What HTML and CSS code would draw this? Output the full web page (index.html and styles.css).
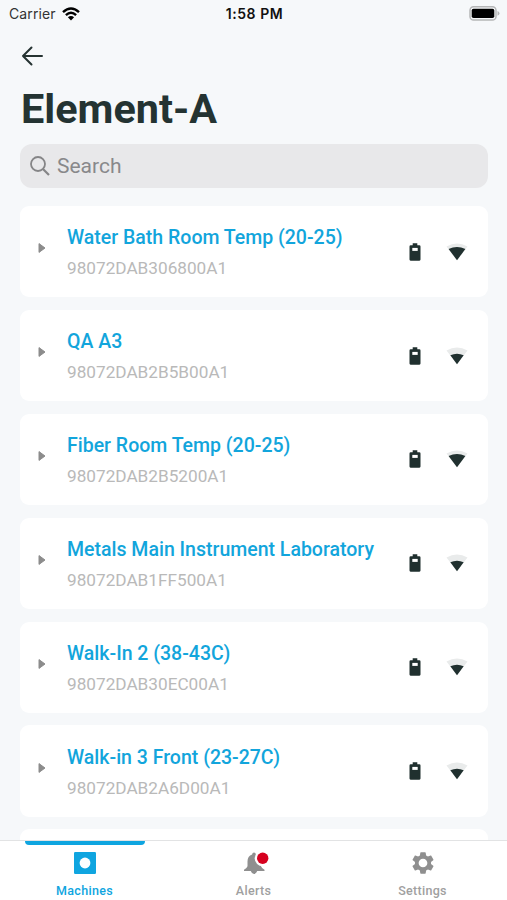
FILE: index.html
```
<!DOCTYPE html>
<html lang="en">
<head>
    <meta charset="UTF-8">
    <meta name="viewport" content="width=device-width, initial-scale=1.0">
    <title>Element-A</title>
    <link rel="stylesheet" href="styles.css">
</head>
<body>

    <!-- Shared icons -->
    <svg class="sprite" aria-hidden="true">
        <symbol id="arrow" viewBox="0 0 8 10">
            <path d="M1 .6 7 5 1 9.4z" fill="#8c8c8c" stroke="#8c8c8c" stroke-width="1" stroke-linejoin="round"/>
        </symbol>
        <symbol id="battery" viewBox="0 0 12 18">
            <path d="M3.700.3h4.600v1.900h2A1.200 1.200 0 0 1 11.500 3.400v13.200a1.100 1.100 0 0 1-1.100 1.100H1.600A1.100 1.100 0 0 1 .5 16.600V3.400a1.200 1.200 0 0 1 1.200-1.200h2z" fill="#20302f"/>
            <path d="M3.300 4.900h5.400v3H3.300z" fill="#fff"/>
        </symbol>
        <symbol id="signal-3" viewBox="0 0 22 18">
            <path d="M.5 3.600Q11-2.800 21.500 3.600L11 17.300z" fill="#e9ebeb"/>
            <path d="M2.600 5.900Q11 2.300 19.400 5.900L11 17.300z" fill="#20302f"/>
        </symbol>
        <symbol id="signal-2" viewBox="0 0 22 18">
            <path d="M.5 3.600Q11-2.800 21.500 3.600L11 17.300z" fill="#e9ebeb"/>
            <path d="M4.300 8.300Q11 5 17.700 8.300L11 17.300z" fill="#20302f"/>
        </symbol>
    </svg>

    <div class="screen">

        <!-- Status Bar -->
        <div class="status-bar">
            <div class="carrier">
                <span>Carrier</span>
                <svg width="18" height="14" viewBox="0 0 18 14" fill="none" stroke="#000" stroke-width="2.400">
                    <path d="M1 5.100Q9-2.300 17 5.100M3.900 8.100Q9 3.300 14.100 8.100"/>
                    <path d="M5.900 10.300Q9 7.600 12.100 10.300L9 13.500z" fill="#000" stroke="none"/>
                </svg>
            </div>
            <div class="time">1:58 PM</div>
            <svg class="phone-battery" width="31" height="15" viewBox="0 0 31 15">
                <rect x="1" y=".8" width="26" height="13.200" rx="3.600" fill="#f7f8fa" stroke="#b5b6b7" stroke-width="1.500"/>
                <rect x="2.700" y="2.700" width="22.600" height="9.400" rx="1.800" fill="#000"/>
                <path d="M28.500 5v4.800q2-1 2-2.400t-2-2.400z" fill="#b5b6b7"/>
            </svg>
        </div>

        <!-- Header -->
        <div class="header">
            <svg class="back" width="22" height="20" viewBox="0 0 22 20" fill="none" stroke="#263332" stroke-width="2" stroke-linecap="round" stroke-linejoin="round">
                <path d="M10.500 1.500 2 10l8.500 8.500M2 10h19"/>
            </svg>
            <h1>Element-A</h1>
            <div class="search">
                <svg width="20" height="20" viewBox="0 0 20 20" fill="none" stroke="#858587">
                    <circle cx="8" cy="8" r="7" stroke-width="1.800"/>
                    <path d="M13 13l6 6" stroke-width="2.200"/>
                </svg>
                <span>Search</span>
            </div>
        </div>

        <!-- Machine List -->
        <div class="list">
            <div class="card">
                <svg class="arrow"><use href="#arrow"/></svg>
                <div class="info">
                    <div class="name">Water Bath Room Temp (20-25)</div>
                    <div class="serial">98072DAB306800A1</div>
                </div>
                <svg class="battery"><use href="#battery"/></svg>
                <svg class="signal"><use href="#signal-3"/></svg>
            </div>
            <div class="card">
                <svg class="arrow"><use href="#arrow"/></svg>
                <div class="info">
                    <div class="name">QA A3</div>
                    <div class="serial">98072DAB2B5B00A1</div>
                </div>
                <svg class="battery"><use href="#battery"/></svg>
                <svg class="signal"><use href="#signal-2"/></svg>
            </div>
            <div class="card">
                <svg class="arrow"><use href="#arrow"/></svg>
                <div class="info">
                    <div class="name">Fiber Room Temp (20-25)</div>
                    <div class="serial">98072DAB2B5200A1</div>
                </div>
                <svg class="battery"><use href="#battery"/></svg>
                <svg class="signal"><use href="#signal-3"/></svg>
            </div>
            <div class="card">
                <svg class="arrow"><use href="#arrow"/></svg>
                <div class="info">
                    <div class="name">Metals Main Instrument Laboratory</div>
                    <div class="serial">98072DAB1FF500A1</div>
                </div>
                <svg class="battery"><use href="#battery"/></svg>
                <svg class="signal"><use href="#signal-2"/></svg>
            </div>
            <div class="card">
                <svg class="arrow"><use href="#arrow"/></svg>
                <div class="info">
                    <div class="name">Walk-In 2 (38-43C)</div>
                    <div class="serial">98072DAB30EC00A1</div>
                </div>
                <svg class="battery"><use href="#battery"/></svg>
                <svg class="signal"><use href="#signal-2"/></svg>
            </div>
            <div class="card">
                <svg class="arrow"><use href="#arrow"/></svg>
                <div class="info">
                    <div class="name">Walk-in 3 Front (23-27C)</div>
                    <div class="serial">98072DAB2A6D00A1</div>
                </div>
                <svg class="battery"><use href="#battery"/></svg>
                <svg class="signal"><use href="#signal-2"/></svg>
            </div>
            <div class="card"></div>
        </div>

        <!-- Tab Bar -->
        <div class="tabs">
            <a href="#" class="tab active">
                <svg width="24" height="24" viewBox="0 0 24 24">
                    <rect x="1" y="1" width="22" height="22" rx="1.200" fill="#0fa5e0"/>
                    <circle cx="12" cy="12" r="5.400" fill="#fff"/>
                </svg>
                <span>Machines</span>
            </a>
            <a href="#" class="tab">
                <svg class="bell" width="24" height="24" viewBox="0 0 24 24">
                    <path d="M12 1.500q1.700 0 1.900 2.100Q19 5.200 19 10.500v4.700q.5 1.800 3.500 3.600v1.200h-7.300q-1 3-3.200 3t-3.200-3H2v-1.200q3-1.800 3.500-3.600v-4.700Q5.500 5.200 10.100 3.600 10.300 1.500 12 1.500z" fill="#8f8f8f"/>
                    <circle cx="20.700" cy="7.300" r="8" fill="#fff"/>
                    <circle cx="20.700" cy="7.300" r="5.700" fill="#d6001f"/>
                </svg>
                <span>Alerts</span>
            </a>
            <a href="#" class="tab">
                <svg width="24" height="24" viewBox="1.300 1.300 21.400 21.400">
                    <path fill="#8f8f8f" d="M19.140 12.940c.04-.3.060-.61.060-.94s-.02-.64-.07-.94l2.030-1.580c.18-.14.230-.41.120-.61l-1.920-3.320c-.12-.22-.37-.29-.59-.22l-2.390.96c-.5-.38-1.030-.7-1.620-.94l-.36-2.540c-.04-.24-.24-.41-.48-.41h-3.840c-.24 0-.43.17-.47.41l-.36 2.540c-.59.24-1.130.57-1.620.94l-2.390-.96c-.22-.08-.47 0-.59.22L2.740 8.870c-.12.21-.08.470.12.610l2.030 1.580c-.05.3-.09.630-.09.940s.02.640.07.940l-2.030 1.580c-.18.140-.23.410-.12.610l1.920 3.320c.12.220.37.290.59.220l2.390-.96c.5.380 1.030.7 1.620.94l.36 2.540c.05.240.24.410.48.410h3.840c.24 0 .44-.17.470-.41l.36-2.540c.59-.24 1.130-.56 1.620-.94l2.390.96c.22.080.47 0 .59-.22l1.920-3.320c.12-.22.070-.47-.12-.61l-2.010-1.580zM12 15.900c-2.150 0-3.900-1.750-3.900-3.900s1.750-3.900 3.900-3.900 3.900 1.750 3.900 3.900-1.750 3.900-3.900 3.900z"/>
                </svg>
                <span>Settings</span>
            </a>
        </div>

    </div>

</body>
</html>
```
FILE: styles.css
```
body, html {
    margin: 0;
    padding: 0;
    font-family: Roboto, sans-serif;
    background: #f6f8fa;
}

svg {
    display: block;
    flex: none;
}

.sprite {
    display: none;
}

.screen {
    display: flex;
    flex-direction: column;
    height: 900px;
    overflow: hidden;
}

/* Status Bar */
.status-bar {
    display: grid;
    grid-template-columns: 1fr auto 1fr;
    align-items: center;
    height: 27px;
    padding: 0 7px 0 9px;
    font-family: Inter, sans-serif;
    font-size: 14px;
    color: #111;
}

.carrier {
    display: flex;
    align-items: center;
    gap: 6px;
    color: #333;
    letter-spacing: 0.1px;
}

.time {
    font-weight: 600;
    letter-spacing: 0.55px;
}

.phone-battery {
    justify-self: end;
}

/* Header */
.header {
    padding: 19px 19px 0 20px;
}

.back {
    margin-left: 1px;
}

h1 {
    margin: 18px 0 10px 1px;
    font-size: 41.4px;
    line-height: 50px;
    font-weight: 700;
    color: #243332;
}

.search {
    display: flex;
    align-items: center;
    gap: 7px;
    height: 44px;
    padding: 0 10px;
    border-radius: 12px;
    background: #e8e8ea;
    font-size: 21px;
    color: #88888b;
}

/* Machine List */
.list {
    flex: 1;
    min-height: 0;
    overflow: hidden;
    display: flex;
    flex-direction: column;
    gap: 12.5px;
    padding: 18px 19px 0 20px;
}

.card {
    display: flex;
    flex: none;
    align-items: center;
    box-sizing: border-box;
    height: 91.4px;
    padding: 0 20px 0 18px;
    border-radius: 9px;
    background: #fff;
}

.arrow {
    width: 8px;
    height: 10px;
    margin: 0 21px 7px 0;
}

.info {
    flex: 1;
    padding-top: 3px;
}

.name {
    font-size: 19.5px;
    line-height: 31px;
    font-weight: 500;
    color: #12a5dc;
    white-space: nowrap;
}

.serial {
    font-size: 17.2px;
    line-height: 31px;
    color: #b9b9b9;
}

.battery {
    width: 12px;
    height: 18px;
    margin-right: 25px;
}

.signal {
    width: 22px;
    height: 18px;
}

/* Tab Bar */
.tabs {
    display: grid;
    grid-template-columns: repeat(3, 1fr);
    box-sizing: border-box;
    height: 60px;
    border-top: 1px solid #e2e3e4;
    background: #fff;
}

.tab {
    position: relative;
    display: flex;
    flex-direction: column;
    align-items: center;
    justify-content: space-between;
    padding: 10px 0 2px;
    font-size: 12.5px;
    font-weight: 500;
    letter-spacing: 0.3px;
    color: #a0a0a0;
    text-decoration: none;
}

.bell {
    overflow: visible;
}

.active {
    color: #0fa5e0;
}

/* Marker above the current tab */
.active::before {
    content: "";
    position: absolute;
    top: 0;
    left: 25px;
    width: 120px;
    height: 4px;
    border-radius: 0 0 4px 4px;
    background: #0fa5e0;
}
```
